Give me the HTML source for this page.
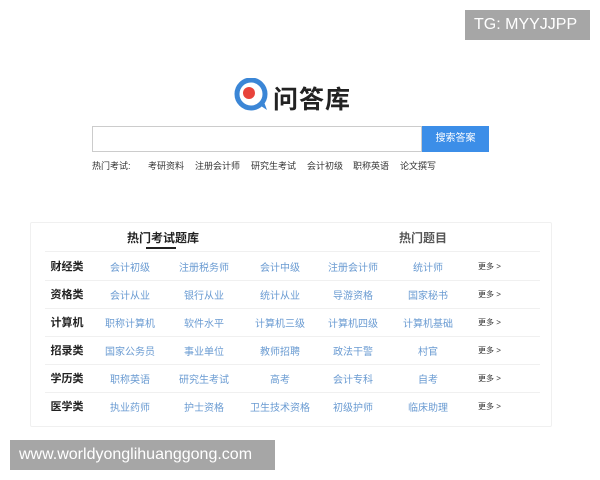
<!DOCTYPE html>
<html><head><meta charset="utf-8"><style>
body{margin:0;width:600px;height:480px;background:#fff;position:relative;overflow:hidden;font-family:"Liberation Sans","Noto Sans CJK SC",sans-serif}
.a{position:absolute;white-space:nowrap}
.wm{background:#a6a6a6;color:#fff;font-size:16px;line-height:30px;padding:0 9px}
.hot{font-size:9px;color:#333;top:159px}
.cat{font-size:11px;color:#222;font-weight:bold;width:40px;text-align:center}
.it{font-size:10px;color:#6a9bd2;width:80px;text-align:center}
.more{font-size:8px;color:#333}
.ln{position:absolute;left:45px;width:495px;height:1px;background:#f0f0f0}
</style></head><body>
<div class="a wm" style="left:465px;top:10px;width:107px">TG: MYYJJPP</div>
<div class="a wm" style="left:10px;top:440px;width:247px;font-size:16px">www.worldyonglihuanggong.com</div>

<svg class="a" style="left:234px;top:78px" width="36" height="34" viewBox="0 0 36 34">
<circle cx="17" cy="16" r="14" fill="none" stroke="#3b86d6" stroke-width="5"/>
<path d="M24 26 L33 32 L30 24Z" fill="#3b86d6"/>
<circle cx="15" cy="15" r="6" fill="#e8433b"/>
</svg>
<div class="a" style="left:273px;top:80px;font-size:25px;font-weight:bold;color:#222;letter-spacing:1px">问答库</div>

<div class="a" style="left:92px;top:126px;width:328px;height:24px;border:1px solid #ccc"></div>
<div class="a" style="left:422px;top:126px;width:67px;height:26px;background:#3c8ee8;color:#fff;font-size:10px;line-height:26px;text-align:center">搜索答案</div>

<div class="a hot" style="left:92px">热门考试:</div>
<div class="a hot" style="left:148px">考研资料</div>
<div class="a hot" style="left:195px">注册会计师</div>
<div class="a hot" style="left:251px">研究生考试</div>
<div class="a hot" style="left:307px">会计初级</div>
<div class="a hot" style="left:353px">职称英语</div>
<div class="a hot" style="left:400px">论文撰写</div>

<div class="a" style="left:30px;top:222px;width:520px;height:203px;border:1px solid #f0f0f0;border-radius:2px"></div>
<div class="ln" style="top:251px"></div>
<div class="a" style="left:127px;top:229px;font-size:12px;font-weight:bold;color:#222">热门考试题库</div>
<div class="a" style="left:146px;top:247px;width:30px;height:2px;background:#222"></div>
<div class="a" style="left:399px;top:229px;font-size:12px;font-weight:bold;color:#555">热门题目</div>

<div class="ln" style="top:280px"></div>
<div class="ln" style="top:308px"></div>
<div class="ln" style="top:336px"></div>
<div class="ln" style="top:364px"></div>
<div class="ln" style="top:392px"></div>

<div id="rows"></div>
<script>
var d=[["财经类","会计初级","注册税务师","会计中级","注册会计师","统计师"],
["资格类","会计从业","银行从业","统计从业","导游资格","国家秘书"],
["计算机","职称计算机","软件水平","计算机三级","计算机四级","计算机基础"],
["招录类","国家公务员","事业单位","教师招聘","政法干警","村官"],
["学历类","职称英语","研究生考试","高考","会计专科","自考"],
["医学类","执业药师","护士资格","卫生技术资格","初级护师","临床助理"]];
var xs=[130,204,280,353,428],h="";
d.forEach(function(r,i){var y=258+i*28;
h+='<div class="a cat" style="left:47px;top:'+y+'px">'+r[0]+'</div>';
for(var j=1;j<6;j++)h+='<div class="a it" style="left:'+(xs[j-1]-40)+'px;top:'+(y+1)+'px">'+r[j]+'</div>';
h+='<div class="a more" style="left:478px;top:'+(y+3)+'px">更多 &gt;</div>';});
document.getElementById("rows").innerHTML=h;
</script>
</body></html>
